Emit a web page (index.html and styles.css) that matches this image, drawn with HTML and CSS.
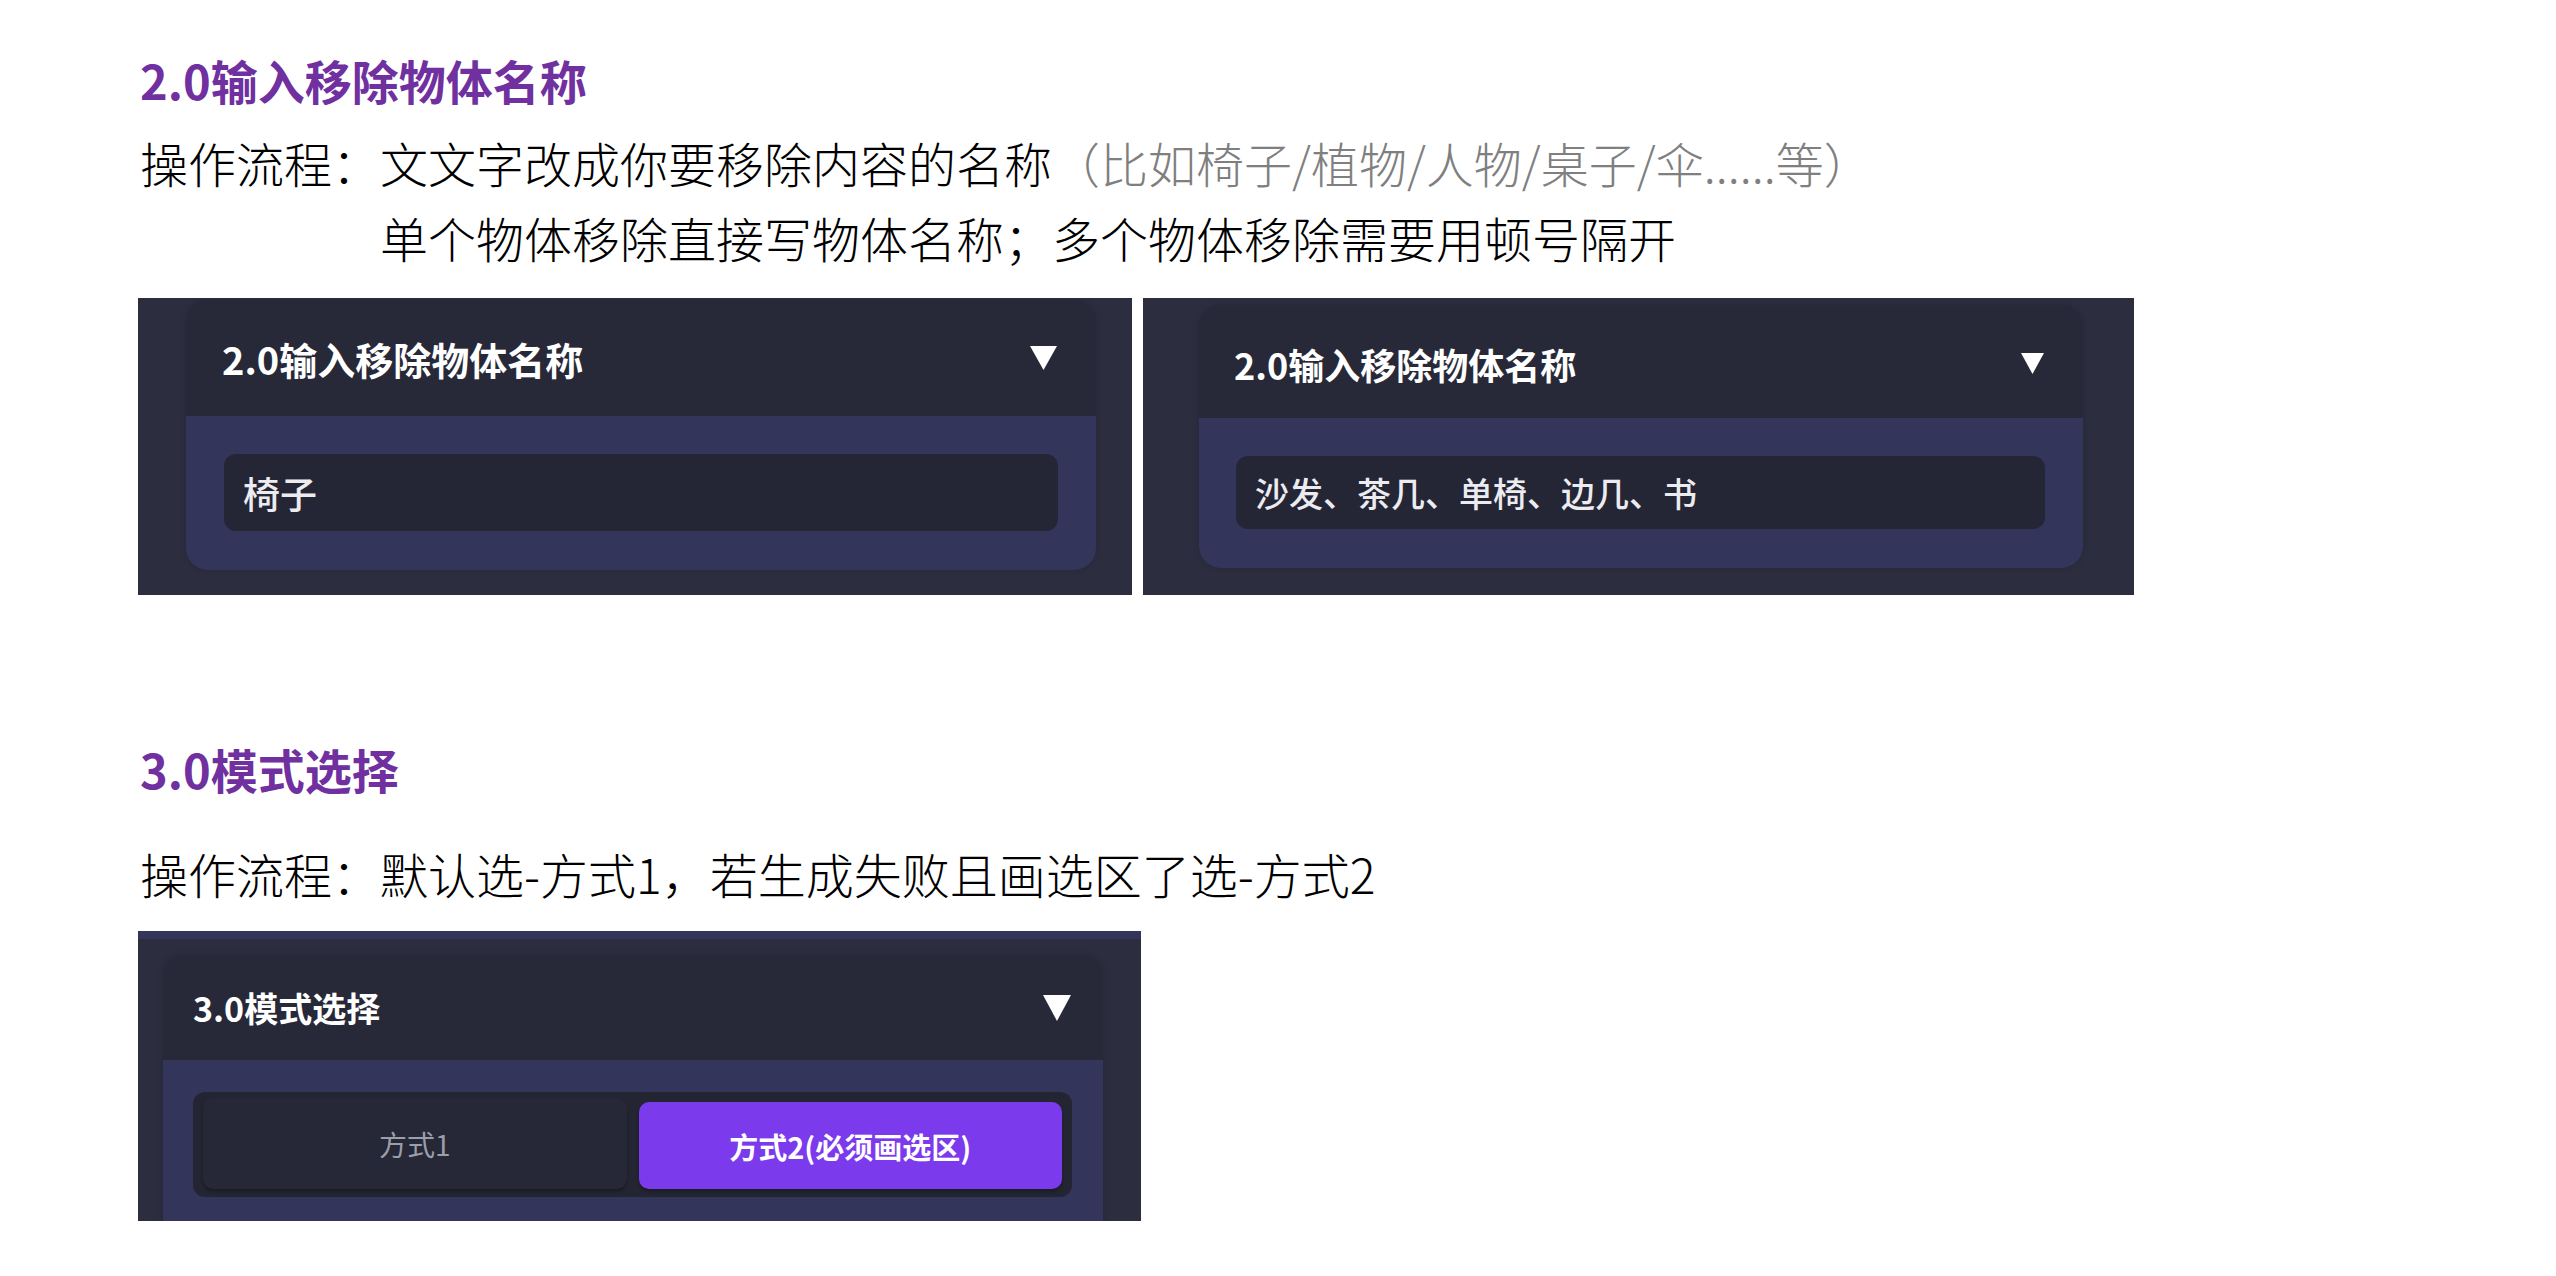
FILE: index.html
```html
<!DOCTYPE html>
<html lang="zh-CN">
<head>
<meta charset="UTF-8" />
<meta name="viewport" content="width=device-width, initial-scale=1" />
<title>移除物体 操作说明</title>
<link rel="stylesheet" href="styles.css">
</head>
<body>
  <div class="page">

    <h2 class="step-title">2.0输入移除物体名称</h2>
    <div class="flow">
      <span class="flow-label">操作流程：</span>
      <div class="flow-lines">
        <div class="flow-line">文文字改成你要移除内容的名称<span class="hint">（比如椅子/植物/人物/桌子/伞......等）</span></div>
        <div class="flow-line">单个物体移除直接写物体名称；多个物体移除需要用顿号隔开</div>
      </div>
    </div>

    <div class="shots">
      <div class="shot shot-a">
        <div class="card">
          <div class="card-head">
            <span class="card-title">2.0输入移除物体名称</span>
            <svg class="caret" width="29" height="26" viewBox="0 0 29 26"><polygon points="1,1 28,1 14.5,25" fill="#fff"/></svg>
          </div>
          <div class="card-body">
            <div class="name-input">椅子</div>
          </div>
        </div>
      </div>

      <div class="shot shot-b">
        <div class="card">
          <div class="card-head">
            <span class="card-title">2.0输入移除物体名称</span>
            <svg class="caret" width="25" height="23" viewBox="0 0 25 23"><polygon points="1,1 24,1 12.5,22" fill="#fff"/></svg>
          </div>
          <div class="card-body">
            <div class="name-input">沙发、茶几、单椅、边几、书</div>
          </div>
        </div>
      </div>
    </div>

    <h2 class="step-title second">3.0模式选择</h2>
    <div class="flow single">
      <span class="flow-label">操作流程：</span>
      <div class="flow-lines">
        <div class="flow-line">默认选-方式1，若生成失败且画选区了选-方式2</div>
      </div>
    </div>

    <div class="shot shot-c">
      <div class="card">
        <div class="card-head">
          <span class="card-title">3.0模式选择</span>
          <svg class="caret" width="30" height="28" viewBox="0 0 30 28"><polygon points="1,1 29,1 15,27" fill="#fff"/></svg>
        </div>
        <div class="card-body">
          <div class="mode-switch">
            <div class="mode">方式1</div>
            <div class="mode active">方式2(必须画选区)</div>
          </div>
        </div>
      </div>
    </div>

  </div>
</body>
</html>
```

FILE: styles.css
```css
body {
  margin: 0;
  background: #fff;
  font-family: "Noto Sans CJK SC", "Noto Sans", sans-serif;
  color: #000;
}

.page {
  padding: 50px 0 40px 140px;
}

.step-title {
  margin: 0;
  font-size: 47px;
  line-height: 60px;
  font-weight: 700;
  color: #7030a0;
}

.step-title.second {
  margin-top: 144px;
}

/* 操作流程 lines */
.flow {
  display: flex;
  margin-top: 15px;
  font-size: 48px;
  line-height: 75px;
  font-weight: 300;
}

.flow.single {
  margin-top: 37px;
}

.flow-label {
  flex: none;
}

.hint {
  color: #7f7f7f;
}

/* screenshots of the panel */
.shots {
  display: flex;
  gap: 11px;
  margin: 23px 0 0 -2px;
}

.shot {
  background: #2c2e40;
  height: 297px;
  box-sizing: border-box;
  overflow: hidden;
}

.shot-a {
  width: 994px;
  padding: 2px 36px 0 48px;
}

.shot-b {
  width: 991px;
  padding: 7px 51px 0 56px;
}

.shot-c {
  width: 1003px;
  height: 290px;
  margin: 20px 0 0 -2px;
  padding: 16px 38px 0 25px;
  border-top: 8px solid #33355a;
}

.card {
  border-radius: 22px;
  overflow: hidden;
  box-shadow: 0 0 6px rgba(0,0,0,0.15);
}

.card-head {
  display: flex;
  align-items: center;
  justify-content: space-between;
  background: #272939;
  color: #fff;
  font-weight: 700;
}

.card-body {
  background: #33355a;
}

.name-input {
  background: #242636;
  border-radius: 12px;
  color: #ececf0;
  display: flex;
  align-items: center;
  padding-left: 19px;
  font-weight: 500;
}

.shot-a .card-head {
  height: 116px;
  padding: 0 38px 0 36px;
  font-size: 38px;
}

.shot-a .card-body {
  padding: 38px 38px 39px 38px;
}

.shot-a .name-input {
  height: 77px;
  font-size: 37px;
}

.shot-b .card-head {
  height: 113px;
  padding: 4px 38px 0 35px;
  box-sizing: border-box;
  font-size: 36px;
}

.shot-b .card-body {
  padding: 38px 38px 39px 37px;
}

.shot-b .name-input {
  height: 73px;
  font-size: 34px;
}

.shot-c .card {
  border-radius: 20px 20px 0 0;
}

.shot-c .card-head {
  height: 105px;
  padding: 0 31px 0 30px;
  font-size: 34px;
}

.shot-c .card-body {
  padding: 32px 31px 40px 30px;
}

/* 方式 switch */
.mode-switch {
  display: flex;
  gap: 12px;
  height: 105px;
  box-sizing: border-box;
  padding: 6px 10px 8px 10px;
  background: #232532;
  border-radius: 12px;
}

.mode {
  flex: 1;
  display: flex;
  align-items: center;
  justify-content: center;
  border-radius: 10px;
  background: #262838;
  color: #9c9eaa;
  font-size: 28px;
  box-shadow: 0 3px 3px rgba(0,0,0,0.25);
}

.mode.active {
  margin-top: 4px;
  background: #7c3aed;
  color: #fff;
  font-weight: 700;
  font-size: 29px;
}
```
